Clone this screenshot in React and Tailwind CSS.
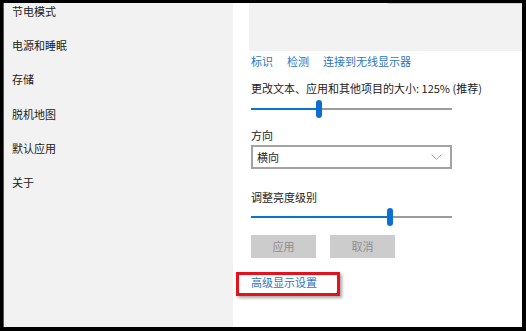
const sideItems = ['节电模式', '电源和睡眠', '存储', '脱机地图', '默认应用', '关于']

function Slider({ pos }) {
  // pos = thumb left offset in px inside a 201px track
  return (
    <div className="relative w-[201px] h-[18px] flex items-center">
      <div className="h-[2px] bg-[#0a74d2]" style={{ width: pos }} />
      <div className="flex-1 h-[2px] bg-[#9c9c9c]" />
      <div
        className="absolute top-0 w-[6px] h-[18px] rounded-[3px] bg-[#0a6fd0]"
        style={{ left: pos - 3 }}
      />
    </div>
  )
}

export default function App() {
  return (
    <div
      className="w-[526px] h-[331px] bg-black pt-[3px] pl-[3px] pr-[4px] pb-[4px] text-[11px] text-[#1b1b1b]"
      style={{ fontFamily: '"Noto Sans CJK SC", "Noto Sans", sans-serif' }}
    >
      <div className="flex h-full overflow-hidden border-l border-[#2a5d9a]">
        {/* Sidebar */}
        <div className="w-[229px] bg-[#f2f2f2] pl-[8px] overflow-hidden">
          <div className="-mt-[9px]">
            {sideItems.map((item) => (
              <div key={item} className="h-[34.25px] flex items-center">
                {item}
              </div>
            ))}
          </div>
        </div>

        {/* Content */}
        <div className="flex-1 bg-white flex flex-col pl-[18px]">
          <div className="-ml-[2px] h-[48px] bg-[#f2f2f2]">
            <div className="ml-[139px] h-px bg-[#c4d7ea]" />
          </div>

          <div className="mt-[2px] h-[16px] leading-[16px] flex text-[#2b74c4]">
            <span>标识</span>
            <span className="ml-[14px]">检测</span>
            <span className="ml-[14px]">连接到无线显示器</span>
          </div>

          <div className="mt-[11px] h-[16px] leading-[16px]">更改文本、应用和其他项目的大小: 125% (推荐)</div>
          <div className="mt-[4px]">
            <Slider pos={68} />
          </div>

          <div className="mt-[9px] h-[16px] leading-[16px]">方向</div>
          <div className="mt-[2px] w-[201px] h-[24px] border-2 border-[#a3a3a3] flex items-center justify-between pl-[4px] pr-[8px]">
            <span>横向</span>
            <svg width="11" height="6" viewBox="0 0 11 6">
              <polyline points="0.5,0.5 5.5,5.5 10.5,0.5" fill="none" stroke="#a8a8a8" strokeWidth="1" />
            </svg>
          </div>

          <div className="mt-[20px] h-[16px] leading-[16px]">调整亮度级别</div>
          <div className="mt-[3px]">
            <Slider pos={139} />
          </div>

          <div className="mt-[9px] flex gap-[14px]">
            <div className="w-[65px] h-[23px] bg-[#cccccc] text-[#8f8f8f] flex items-center justify-center">应用</div>
            <div className="w-[65px] h-[23px] bg-[#cccccc] text-[#8f8f8f] flex items-center justify-center">取消</div>
          </div>

          <div className="relative mt-[16px] h-[16px] leading-[16px] text-[#2b74c4]">
            高级显示设置
            <div className="absolute -left-[15px] -top-[2px] w-[104px] h-[24px] border-[3px] border-[#e3121c] shadow-[2px_2px_3px_rgba(0,0,0,0.35)]" />
          </div>
        </div>
      </div>
    </div>
  )
}
